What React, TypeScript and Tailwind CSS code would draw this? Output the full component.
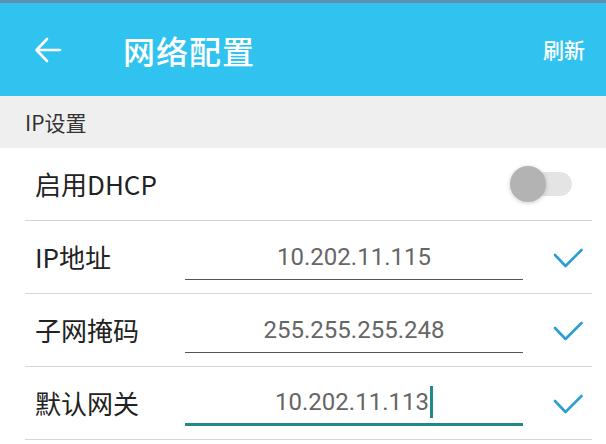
import { useState } from "react";

const Check = () => (
  <svg width="30" height="22" viewBox="0 0 30 22" fill="none">
    <path d="M2 8 L12.5 19 L28.5 3" stroke="#2a9fd6" strokeWidth="2.6" strokeLinecap="round" strokeLinejoin="round" />
  </svg>
);

const Field: React.FC<{ label: string; value: string; focused?: boolean }> = ({ label, value, focused }) => (
  <div className="h-[73px] flex items-center border-b border-[#d6d6d6]">
    <div className="w-[160px] pl-[10px] text-[26px] text-[#222] leading-none">{label}</div>
    <div
      className={`w-[338px] h-[45px] flex items-center justify-center ${
        focused ? "border-b-[3px] border-[#22898a]" : "border-b-[1.5px] border-[#555]"
      }`}
    >
      <span className="text-[24px] text-[#666] leading-none font-['Roboto',sans-serif]">{value}</span>
      {focused && <span className="w-[3px] h-[32px] bg-[#22898a] ml-[1px]" />}
    </div>
    <div className="ml-[30px] pt-[2px]">
      <Check />
    </div>
  </div>
);

export default function App() {
  const [dhcp] = useState(false);
  return (
    <div className="w-[606px] h-[444px] overflow-hidden bg-white font-['Noto_Sans_CJK_SC','Noto_Sans',sans-serif]">
      <div className="h-[3px] bg-[#5d8fb0]" />
      <div className="h-[93px] bg-[#30c3ef] flex items-center text-white">
        <svg className="ml-[34px]" width="28" height="26" viewBox="0 0 28 26" fill="none">
          <path d="M26 13 H3 M13 2 L2.5 13 L13 24" stroke="white" strokeWidth="2.6" strokeLinecap="round" strokeLinejoin="round" />
        </svg>
        <div className="ml-[61px] text-[32px] font-medium leading-none tracking-[1px]">网络配置</div>
        <div className="ml-auto mr-[21px] text-[21px] font-medium leading-none">刷新</div>
      </div>
      <div className="h-[52px] bg-[#efefef] flex items-center pl-[25px] text-[21px] text-[#333] leading-none">
        IP设置
      </div>
      <div className="ml-[25px] mr-[14px]">
        <div className="h-[73px] flex items-center border-b border-[#d6d6d6]">
          <div className="pl-[10px] text-[26px] text-[#222] leading-none">启用DHCP</div>
          <div className="ml-auto mr-[20px] relative w-[62px] h-[40px] flex items-center">
            <div className={`absolute left-[14px] right-0 h-[24px] rounded-full ${dhcp ? "bg-[#9fdcf2]" : "bg-[#e4e4e4]"}`} />
            <div className="absolute left-0 w-[36px] h-[36px] rounded-full bg-[#b3b3b3] shadow-[0_1px_4px_rgba(0,0,0,0.2)]" />
          </div>
        </div>
        <Field label="IP地址" value="10.202.11.115" />
        <Field label="子网掩码" value="255.255.255.248" />
        <Field label="默认网关" value="10.202.11.113" focused />
      </div>
    </div>
  );
}
